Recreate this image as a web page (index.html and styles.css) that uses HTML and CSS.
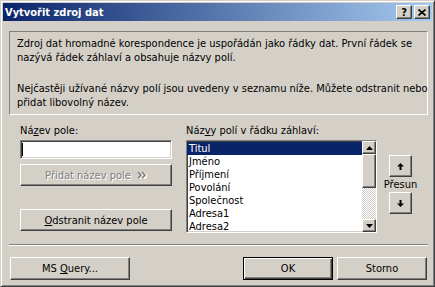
FILE: index.html
```html
<!DOCTYPE html>
<html lang="cs">
<head>
    <meta charset="UTF-8">
    <title>Vytvořit zdroj dat</title>
    <link rel="stylesheet" href="styles.css">
</head>
<body>
    <div class="window">
        <div class="titlebar">
            <span class="title">Vytvořit zdroj dat</span>
            <div class="title-buttons">
                <span class="tbtn raised help">?</span>
                <span class="tbtn raised">
                    <svg width="8" height="7" viewBox="0 0 8 7"><path d="M0.5 0.5 L7.5 6.5 M7.5 0.5 L0.5 6.5" stroke="#000" stroke-width="1.6"/></svg>
                </span>
            </div>
        </div>

        <div class="client">
            <div class="info">
                <p>Zdroj dat hromadné korespondence je uspořádán jako řádky dat. První řádek se<br>nazývá řádek záhlaví a obsahuje názvy polí.</p>
                <p>Nejčastěji užívané názvy polí jsou uvedeny v seznamu níže. Můžete odstranit nebo<br>přidat libovolný název.</p>
            </div>

            <div class="fields">
                <div class="field-col">
                    <label>Ná<u>z</u>ev pole:</label>
                    <div class="textbox sunken"><span class="caret"></span></div>
                    <button class="btn raised add" disabled>
                        <span>Přidat název pole</span>
                        <svg class="chevrons" width="10" height="8" viewBox="0 0 10 8">
                            <path d="M2 1 L5 4 L2 7 M6 1 L9 4 L6 7" fill="none" stroke="#fff" stroke-width="1.6" transform="translate(1 1)"/>
                            <path d="M1 1 L4 4 L1 7 M5 1 L8 4 L5 7" fill="none" stroke="#808080" stroke-width="1.6"/>
                        </svg>
                    </button>
                    <button class="btn raised remove"><span><u>O</u>dstranit název pole</span></button>
                </div>

                <div class="list-col">
                    <label>Náz<u>v</u>y polí v řádku záhlaví:</label>
                    <div class="listbox sunken">
                        <ul class="items">
                            <li class="selected">Titul</li>
                            <li>Jméno</li>
                            <li>Příjmení</li>
                            <li>Povolání</li>
                            <li>Společnost</li>
                            <li>Adresa1</li>
                            <li>Adresa2</li>
                        </ul>
                        <div class="scrollbar">
                            <span class="sb-btn raised">
                                <svg width="7" height="4" viewBox="0 0 7 4"><polygon points="3.5,0 7,4 0,4" fill="#000"/></svg>
                            </span>
                            <span class="thumb raised"></span>
                            <span class="track"></span>
                            <span class="sb-btn raised">
                                <svg width="7" height="4" viewBox="0 0 7 4"><polygon points="0,0 7,0 3.5,4" fill="#000"/></svg>
                            </span>
                        </div>
                    </div>
                </div>

                <div class="move-col">
                    <button class="btn raised move-btn">
                        <svg width="7" height="7" viewBox="0 0 7 7"><polygon points="3.5,0 7,3.5 4.5,3.5 4.5,7 2.5,7 2.5,3.5 0,3.5" fill="#000"/></svg>
                    </button>
                    <span class="move-label">Přesun</span>
                    <button class="btn raised move-btn">
                        <svg width="7" height="7" viewBox="0 0 7 7"><polygon points="2.5,0 4.5,0 4.5,3.5 7,3.5 3.5,7 0,3.5 2.5,3.5" fill="#000"/></svg>
                    </button>
                </div>
            </div>

            <div class="separator"></div>

            <div class="actions">
                <button class="btn raised query"><span>MS <u>Q</u>uery...</span></button>
                <button class="btn default ok">OK</button>
                <button class="btn raised cancel">Storno</button>
            </div>
        </div>
    </div>
</body>
</html>
```

FILE: styles.css
```css
* {
    margin: 0;
    padding: 0;
    box-sizing: border-box;
}

body {
    font-family: "DejaVu Sans Condensed", "DejaVu Sans", sans-serif;
    font-size: 11px;
    color: #000;
    background-color: #d4d0c8;
}

u {
    text-decoration: underline;
    text-underline-offset: 1px;
}

.window {
    width: 435px;
    height: 287px;
    background-color: #d4d0c8;
    border: 1px solid;
    border-color: #d4d0c8 #404040 #404040 #d4d0c8;
    box-shadow: inset 1px 1px #fff, inset -1px -1px #808080;
    padding: 2px;
    display: flex;
    flex-direction: column;
}

/* 3D edges */
.raised {
    background-color: #d4d0c8;
    border: 1px solid;
    border-color: #fff #404040 #404040 #fff;
    box-shadow: inset -1px -1px #808080;
}

.sunken {
    background-color: #fff;
    border: 1px solid;
    border-color: #808080 #fff #fff #808080;
    box-shadow: inset 1px 1px #404040, inset -1px -1px #d4d0c8;
}

.titlebar {
    height: 18px;
    background: linear-gradient(to right, #0a246a, #a6caf0);
    display: flex;
    align-items: center;
    padding: 0 2px 0 2px;
}

.title {
    flex: 1;
    color: #fff;
    font-weight: bold;
}

.title-buttons {
    display: flex;
    gap: 2px;
}

.tbtn {
    width: 16px;
    height: 14px;
    display: flex;
    align-items: center;
    justify-content: center;
}

.help {
    font-weight: bold;
    font-size: 11px;
    line-height: 1;
}

.client {
    flex: 1;
    padding: 10px 4px 0 6px;
    display: flex;
    flex-direction: column;
}

.info {
    height: 84px;
    border: 1px solid;
    border-color: #808080 #fff #fff #808080;
    padding: 5px 7px;
    line-height: 14px;
}

.info p {
    white-space: nowrap;
}

.info p + p {
    margin-top: 17px;
}

.fields {
    display: flex;
    height: 111px;
    margin-top: 9px;
}

label {
    display: block;
    height: 16px;
    line-height: 13px;
}

.field-col {
    width: 152px;
    margin-left: 11px;
    display: flex;
    flex-direction: column;
}

.textbox {
    height: 19px;
    display: flex;
    align-items: center;
    padding-left: 1px;
}

.caret {
    width: 1px;
    height: 13px;
    background-color: #000;
}

.btn {
    height: 22px;
    font: inherit;
    color: #000;
    display: flex;
    align-items: center;
    justify-content: center;
    gap: 6px;
    white-space: nowrap;
}

.btn[disabled] {
    color: #808080;
    text-shadow: 1px 1px #fff;
}

.add {
    margin-top: 5px;
}

.remove {
    margin-top: 23px;
}

.list-col {
    width: 191px;
    margin-left: 14px;
}

.listbox {
    height: 93px;
    display: flex;
    overflow: hidden;
}

.items {
    flex: 1;
    list-style: none;
    overflow: hidden;
    padding-top: 1px;
}

.items li {
    height: 13px;
    line-height: 13px;
    padding-left: 2px;
}

.items li.selected {
    background-color: #0a246a;
    color: #fff;
}

.scrollbar {
    width: 14px;
    display: flex;
    flex-direction: column;
}

.sb-btn {
    height: 13px;
    display: flex;
    align-items: center;
    justify-content: center;
}

.thumb {
    height: 34px;
}

.track {
    flex: 1;
    background: repeating-conic-gradient(#fff 0 25%, #d4d0c8 0 50%) 0 0 / 2px 2px;
}

.move-col {
    width: 47px;
    display: flex;
    flex-direction: column;
    align-items: center;
    padding-top: 31px;
}

.move-btn {
    width: 23px;
}

.move-label {
    line-height: 15px;
}

.separator {
    margin-top: 9px;
    border-top: 1px solid #808080;
    border-bottom: 1px solid #fff;
}

.actions {
    display: flex;
    margin-top: 11px;
    padding: 0 1px;
}

.actions .btn {
    height: 23px;
}

.query {
    width: 120px;
}

.ok {
    width: 90px;
    margin-left: auto;
    background-color: #d4d0c8;
    border: 1px solid #000;
    box-shadow: inset 1px 1px #fff, inset -1px -1px #404040, inset -2px -2px #808080;
}

.cancel {
    width: 90px;
    margin-left: 4px;
}
```
